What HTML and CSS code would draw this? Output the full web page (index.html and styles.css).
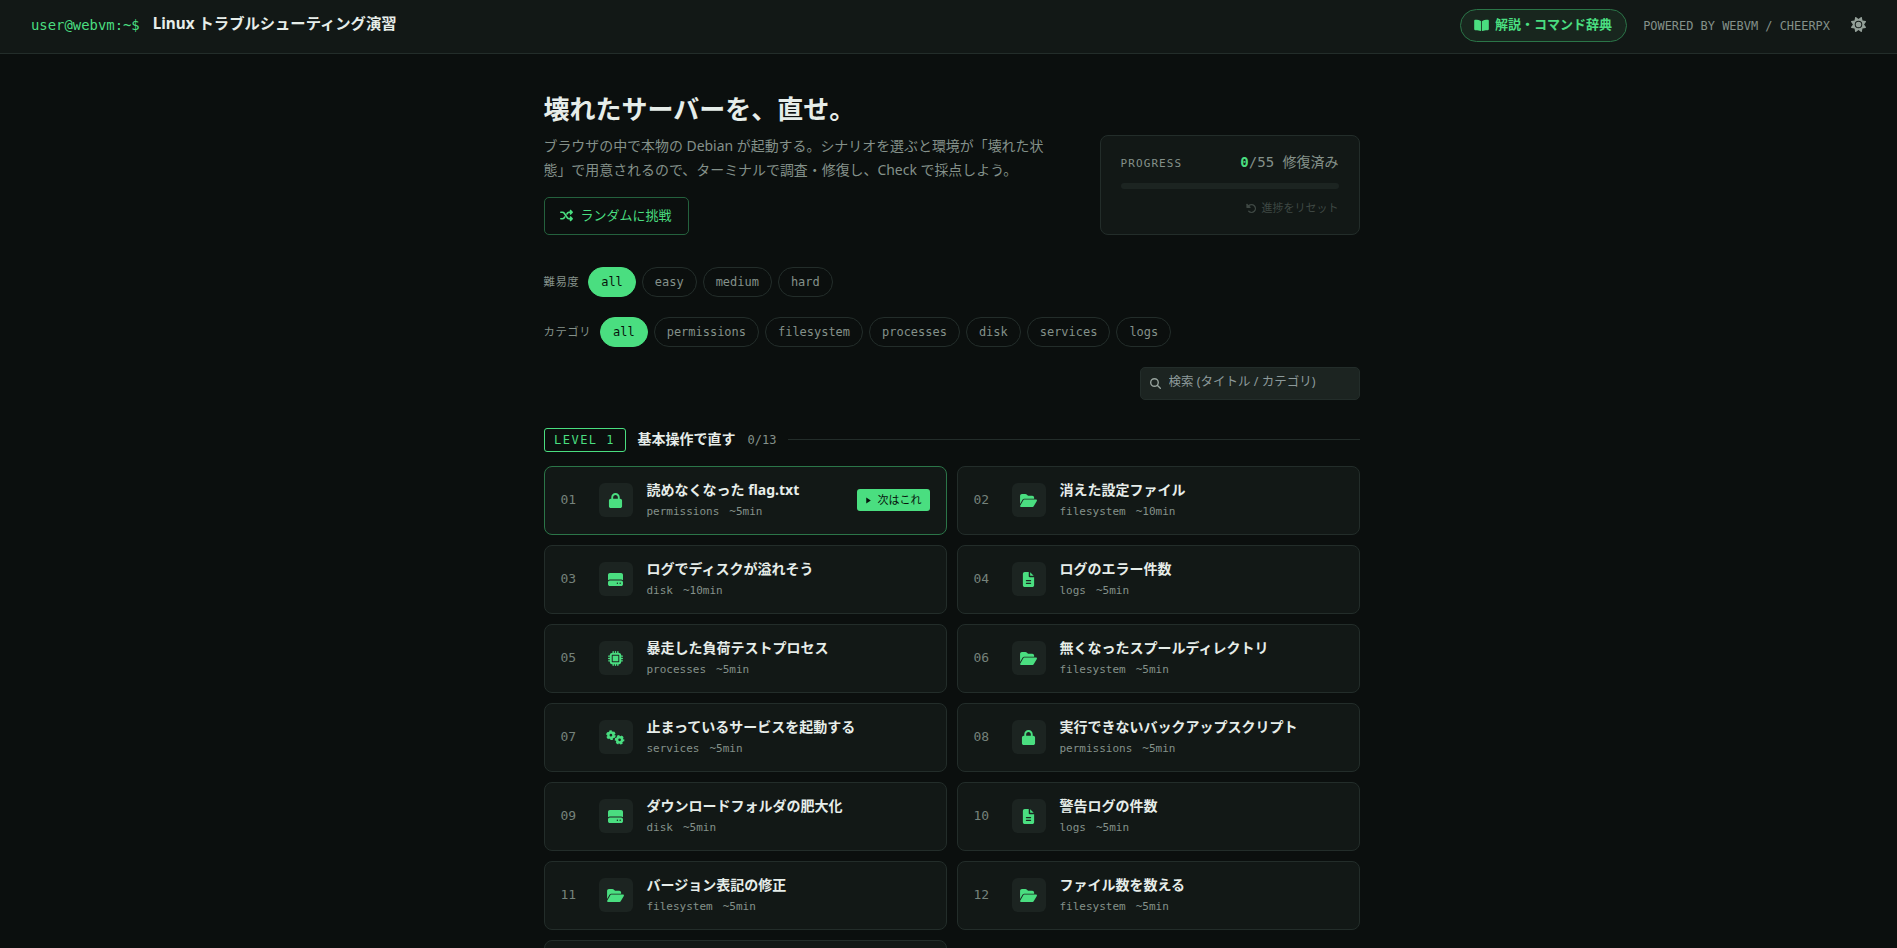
FILE: index.html
```html
<!DOCTYPE html>
<html lang="ja">
<head>
  <meta charset="UTF-8" />
  <meta name="viewport" content="width=device-width, initial-scale=1.0"/>
  <title>Linux トラブルシューティング演習</title>
  <link rel="stylesheet" href="styles.css">
</head>
<body>
  <svg class="sprite" aria-hidden="true">
    <symbol id="i-lock" viewBox="0 0 448 512"><path d="M144 144v48h160v-48c0-44-36-80-80-80s-80 36-80 80zM80 192v-48C80 64 144 0 224 0s144 64 144 144v48h16c35 0 64 29 64 64v192c0 35-29 64-64 64H64c-35 0-64-29-64-64V256c0-35 29-64 64-64z"/></symbol>
    <symbol id="i-folder" viewBox="0 0 576 512"><path d="M89 224 0 375V96c0-35 29-64 64-64h118c17 0 33 7 45 19l26 26c12 12 28 19 45 19h118c35 0 64 29 64 64v32H144c-23 0-44 12-55 32zm27 16c6-10 17-16 28-16h400c12 0 22 6 28 16s6 22 0 32L460 464c-6 10-17 16-28 16H32c-12 0-22-6-28-16s-6-22 0-32z"/></symbol>
    <symbol id="i-disk" viewBox="0 0 512 512"><path d="M0 96c0-35 29-64 64-64h384c35 0 64 29 64 64v184c-17-15-40-24-64-24H64c-24 0-47 9-64 24zM64 288h384c35 0 64 29 64 64v64c0 35-29 64-64 64H64c-35 0-64-29-64-64v-64c0-35 29-64 64-64zm256 120a24 24 0 1 0 0-48 24 24 0 1 0 0 48zm96 0a24 24 0 1 0 0-48 24 24 0 1 0 0 48z" fill-rule="evenodd"/></symbol>
    <symbol id="i-file" viewBox="0 0 384 512"><path d="M64 0C29 0 0 29 0 64v384c0 35 29 64 64 64h256c35 0 64-29 64-64V176H232c-18 0-32-14-32-32V0zm184 8v120h122zM120 272h144c11 0 20 9 20 20s-9 20-20 20H120c-11 0-20-9-20-20s9-20 20-20zm0 96h144c11 0 20 9 20 20s-9 20-20 20H120c-11 0-20-9-20-20s9-20 20-20z" fill-rule="evenodd"/></symbol>
    <symbol id="i-chip" viewBox="0 0 512 512"><path d="M176 24v40M256 24v40M336 24v40M176 448v40M256 448v40M336 448v40M24 176h40M24 256h40M24 336h40M448 176h40M448 256h40M448 336h40" stroke="currentColor" stroke-width="48" stroke-linecap="round"/><path d="M128 64h256c35 0 64 29 64 64v256c0 35-29 64-64 64H128c-35 0-64-29-64-64V128c0-35 29-64 64-64zm16 64c-9 0-16 7-16 16v224c0 9 7 16 16 16h224c9 0 16-7 16-16V144c0-9-7-16-16-16zm16 32h192v192H160z" fill-rule="evenodd"/></symbol>
    <symbol id="i-gears" viewBox="0 0 640 512"><g fill="none" stroke="currentColor"><circle cx="164" cy="176" r="88" stroke-width="84"/><circle cx="164" cy="176" r="137" stroke-width="54" stroke-dasharray="86 57.5"/><circle cx="460" cy="336" r="88" stroke-width="84"/><circle cx="460" cy="336" r="137" stroke-width="54" stroke-dasharray="86 57.5" stroke-dashoffset="36"/></g></symbol>
    <symbol id="i-book" viewBox="0 0 576 512"><path d="M272 84v372c0 12-8 20-18 16-60-24-122-34-222-32-18 0-32-14-32-32V64c0-18 14-32 32-32 110 0 180 12 240 52zM304 84v372c0 12 8 20 18 16 60-24 122-34 222-32 18 0 32-14 32-32V64c0-18-14-32-32-32-110 0-180 12-240 52z"/></symbol>
    <symbol id="i-shuffle" viewBox="0 0 512 512"><path d="M32 128h64c26 0 48 10 64 32l136 192c16 22 38 32 64 32h60M32 384h64c26 0 48-10 64-32l24-34M272 194l24-34c16-22 38-32 64-32h60" fill="none" stroke="currentColor" stroke-width="64" stroke-linecap="round"/><path d="M403 34c12-5 26-2 35 7l64 64c13 12 13 33 0 46l-64 64c-9 9-23 12-35 7s-19-17-19-30V64c0-13 7-25 19-30zM403 290c12-5 26-2 35 7l64 64c13 12 13 33 0 46l-64 64c-9 9-23 12-35 7s-19-17-19-30V320c0-13 7-25 19-30z"/></symbol>
    <symbol id="i-undo" viewBox="0 0 512 512"><path d="M128 128a181 181 0 1 1 0 256" fill="none" stroke="currentColor" stroke-width="64" stroke-linecap="round"/><path d="M16 56c0-22 26-32 41-17l152 152c15 15 5 41-17 41H40c-14 0-24-10-24-24z"/></symbol>
    <symbol id="i-search" viewBox="0 0 512 512"><path d="M208 32a176 176 0 1 1 0 352 176 176 0 1 1 0-352zm130 306 142 142" fill="none" stroke="currentColor" stroke-width="64" stroke-linecap="round"/></symbol>
    <symbol id="i-sun" viewBox="0 0 512 512"><path d="M361 2c6 2 10 7 11 13l20 105 105 20c6 1 11 5 13 11s2 12-2 17l-61 88 61 88c4 5 4 11 2 17s-7 10-13 11l-105 20-20 105c-1 6-5 11-11 13s-12 2-17-2l-88-61-88 61c-5 4-11 4-17 2s-10-7-11-13l-20-105-105-20c-6-1-11-5-13-11s-2-12 2-17l61-88-61-88c-4-5-4-11-2-17s7-10 13-11l105-20 20-105c1-6 5-11 11-13s12-2 17 2l88 61 88-61c5-4 11-4 17-2zM256 128a128 128 0 1 0 0 256 128 128 0 1 0 0-256zm0 32a96 96 0 1 1 0 192 96 96 0 1 1 0-192z" fill-rule="evenodd"/></symbol>
    <symbol id="i-play" viewBox="0 0 384 512"><path d="M20 20v472l350-236z"/></symbol>
  </svg>

  <header class="topbar">
    <span class="prompt">user@webvm:~$</span>
    <h1>Linux トラブルシューティング演習</h1>
    <nav class="top-right">
      <a class="dict"><svg class="icon-book"><use href="#i-book"/></svg><span>解説・コマンド辞典</span></a>
      <span class="powered">POWERED BY WEBVM / CHEERPX</span>
      <svg class="icon-sun"><use href="#i-sun"/></svg>
    </nav>
  </header>

  <main class="wrap">
    <section class="hero">
      <div class="hero-text">
        <h2>壊れたサーバーを、直せ。</h2>
        <p>ブラウザの中で本物の Debian が起動する。シナリオを選ぶと環境が「壊れた状<br>態」で用意されるので、ターミナルで調査・修復し、Check で採点しよう。</p>
        <button class="random"><svg><use href="#i-shuffle"/></svg><span>ランダムに挑戦</span></button>
      </div>
      <div class="progress">
        <div class="progress-head">
          <span class="progress-label">PROGRESS</span>
          <span class="progress-count"><b>0</b>/55 修復済み</span>
        </div>
        <div class="bar"></div>
        <button class="reset"><svg><use href="#i-undo"/></svg><span>進捗をリセット</span></button>
      </div>
    </section>

    <div class="filters">
      <span class="filter-label">難易度</span>
      <button class="chip active">all</button>
      <button class="chip">easy</button>
      <button class="chip">medium</button>
      <button class="chip">hard</button>
    </div>
    <div class="filters">
      <span class="filter-label">カテゴリ</span>
      <button class="chip active">all</button>
      <button class="chip">permissions</button>
      <button class="chip">filesystem</button>
      <button class="chip">processes</button>
      <button class="chip">disk</button>
      <button class="chip">services</button>
      <button class="chip">logs</button>
    </div>
    <label class="search">
      <svg><use href="#i-search"/></svg>
      <input type="text" placeholder="検索 (タイトル / カテゴリ)">
    </label>

    <div class="level">
      <span class="level-tag">LEVEL 1</span>
      <h3>基本操作で直す</h3>
      <span class="level-count">0/13</span>
      <span class="level-line"></span>
    </div>

    <div class="grid" id="grid"></div>
  </main>

  <script>
    const icons = {
      permissions: "lock", filesystem: "folder", disk: "disk",
      logs: "file", processes: "chip", services: "gears"
    };
    const scenarios = [
      ["読めなくなった flag.txt", "permissions", 5],
      ["消えた設定ファイル", "filesystem", 10],
      ["ログでディスクが溢れそう", "disk", 10],
      ["ログのエラー件数", "logs", 5],
      ["暴走した負荷テストプロセス", "processes", 5],
      ["無くなったスプールディレクトリ", "filesystem", 5],
      ["止まっているサービスを起動する", "services", 5],
      ["実行できないバックアップスクリプト", "permissions", 5],
      ["ダウンロードフォルダの肥大化", "disk", 5],
      ["警告ログの件数", "logs", 5],
      ["バージョン表記の修正", "filesystem", 5],
      ["ファイル数を数える", "filesystem", 5]
    ];
    document.getElementById("grid").innerHTML = scenarios.map(([title, cat, min], i) => `
      <a class="card${i === 0 ? " next" : ""}">
        <span class="num">${String(i + 1).padStart(2, "0")}</span>
        <span class="tile"><svg class="icon-${icons[cat]}"><use href="#i-${icons[cat]}"/></svg></span>
        <span class="info">
          <span class="title">${title}</span>
          <span class="meta"><span>${cat}</span><span>~${min}min</span></span>
        </span>
        ${i === 0 ? '<span class="badge"><svg><use href="#i-play"/></svg><span>次はこれ</span></span>' : ""}
      </a>`).join("") + '<a class="card"></a>';
  </script>
</body>
</html>
```
FILE: styles.css
```css
:root {
  --bg: #0b0f0e;
  --panel: #121816;
  --raised: #1c2421;
  --line: #232d2a;
  --text: #e6ede9;
  --muted: #84918a;
  --green: #4ade80;
  --green-dim: #2b7548;
  --sans: "Noto Sans", "Noto Sans CJK JP", sans-serif;
  --mono: "DejaVu Sans Mono", "Noto Sans CJK JP", monospace;
}
* {
  box-sizing: border-box;
}
body {
  margin: 0;
  height: 948px;
  overflow: hidden;
  background: var(--bg);
  color: var(--text);
  font-family: var(--sans);
}
h1, h2, h3, p {
  margin: 0;
}
button {
  font-family: inherit;
  background: none;
  border: none;
}
svg {
  fill: currentColor;
  flex: none;
}
.sprite {
  display: none;
}

/* header */
.topbar {
  height: 54px;
  padding: 0 30px 2px 31px;
  display: flex;
  align-items: center;
  background: var(--panel);
  border-bottom: 1px solid var(--line);
}
.prompt {
  padding-bottom: 1px;
  font-family: var(--mono);
  font-size: 13.9px;
  color: var(--green);
  margin-right: 13px;
}
h1 {
  padding-bottom: 6px;
  font-size: 15.3px;
  font-weight: 700;
  line-height: 20px;
}
.top-right {
  margin-left: auto;
  display: flex;
  align-items: center;
}
.dict {
  height: 33px;
  padding: 0 14px 0 13px;
  display: flex;
  align-items: center;
  gap: 6px;
  border: 1px solid var(--green-dim);
  border-radius: 17px;
  background: #18261e;
  color: var(--green);
  font-size: 13px;
  font-weight: 700;
}
.dict span {
  padding-bottom: 5px;
}
.icon-book {
  width: 15px;
  height: 13px;
}
.powered {
  margin-left: 16px;
  font-family: var(--mono);
  font-size: 11.95px;
  color: var(--muted);
}
.icon-sun {
  width: 15px;
  height: 15px;
  margin: 0 1px 2px 21px;
  color: #94a099;
}

/* hero */
.wrap {
  width: 822px;
  margin: 0 auto;
  padding-left: 6px;
}
.hero {
  padding-top: 35px;
  display: flex;
  justify-content: space-between;
  align-items: flex-end;
}
h2 {
  padding-bottom: 1px;
  font-size: 26px;
  font-weight: 700;
  line-height: 40px;
}
.hero p {
  margin-top: 4px;
  font-size: 13.95px;
  line-height: 24px;
  color: var(--muted);
  white-space: nowrap;
}
.random {
  width: 145px;
  height: 38px;
  margin-top: 15px;
  padding: 0 0 2px;
  display: flex;
  align-items: center;
  justify-content: center;
  gap: 7px;
  border: 1px solid #24613d;
  border-radius: 5px;
  color: var(--green);
  font-size: 13px;
}
.random span {
  padding-bottom: 2px;
}
.random svg {
  width: 13px;
  height: 13px;
}
.progress {
  width: 260px;
  height: 100px;
  padding: 15px 20px;
  background: var(--panel);
  border: 1px solid var(--line);
  border-radius: 8px;
}
.progress-head {
  display: flex;
  justify-content: space-between;
  align-items: center;
  height: 24px;
  font-family: var(--mono);
  color: var(--muted);
}
.progress-label {
  font-size: 11px;
  letter-spacing: 1.1px;
}
.progress-count {
  padding-bottom: 4px;
  font-size: 14px;
}
.progress-count b {
  color: var(--green);
}
.bar {
  height: 6px;
  margin-top: 8px;
  border-radius: 3px;
  background: var(--raised);
}
.reset {
  margin: 11px 0 0 auto;
  padding: 0;
  display: flex;
  align-items: center;
  gap: 5px;
  color: #3f4844;
  font-size: 11px;
  line-height: 16px;
}
.reset svg {
  width: 11px;
  height: 11px;
}

/* filters */
.filters {
  display: flex;
  align-items: center;
  gap: 6px;
  height: 30px;
  margin-top: 20px;
}
.hero + .filters {
  margin-top: 32px;
}
.filter-label {
  margin-right: 3px;
  padding-bottom: 2px;
  font-size: 11.4px;
  letter-spacing: 0.5px;
  color: var(--muted);
}
.chip {
  height: 30px;
  padding: 0 12px;
  border: 1px solid var(--line);
  border-radius: 15px;
  color: var(--muted);
  font-family: var(--mono);
  font-size: 11.97px;
}
.chip.active {
  background: var(--green);
  border-color: var(--green);
  color: #07130c;
}
.search {
  width: 220px;
  height: 33px;
  margin: 20px 0 0 auto;
  padding: 0 9px;
  display: flex;
  align-items: center;
  gap: 8px;
  background: var(--raised);
  border: 1px solid var(--line);
  border-radius: 5px;
  color: #97a39d;
}
.search svg {
  width: 11px;
  height: 11px;
}
.search input {
  flex: 1;
  min-width: 0;
  padding: 0 0 5px;
  border: none;
  background: none;
  font: 12.5px var(--sans);
}
.search input::placeholder {
  color: #8d9a9b;
}

/* level heading */
.level {
  height: 24px;
  margin-top: 28px;
  display: flex;
  align-items: center;
}
.level-tag {
  width: 82px;
  height: 24px;
  border: 1px solid var(--green);
  border-radius: 3px;
  color: var(--green);
  font-family: var(--mono);
  font-size: 12px;
  letter-spacing: 1.5px;
  line-height: 22px;
  text-align: center;
}
h3 {
  margin-left: 12px;
  padding-bottom: 2px;
  font-size: 14px;
  line-height: 22px;
}
.level-count {
  margin-left: 12px;
  font-family: var(--mono);
  font-size: 12px;
  color: var(--muted);
}
.level-line {
  flex: 1;
  height: 1px;
  margin: 0 0 1px 12px;
  background: var(--line);
}

/* scenario cards */
.grid {
  margin-top: 14px;
  display: grid;
  grid-template-columns: 1fr 1fr;
  gap: 10px;
}
.card {
  height: 69px;
  padding: 0 16px 1px;
  display: flex;
  align-items: center;
  background: var(--panel);
  border: 1px solid var(--line);
  border-radius: 8px;
}
.card.next {
  border-color: var(--green-dim);
}
.num {
  width: 38px;
  padding-bottom: 1px;
  font-family: var(--mono);
  font-size: 13px;
  color: #75827b;
}
.tile {
  width: 34px;
  height: 34px;
  display: flex;
  align-items: center;
  justify-content: center;
  border-radius: 6px;
  background: var(--raised);
  color: var(--green);
}
.tile svg {
  width: 15px;
  height: 15px;
}
.tile .icon-folder {
  width: 17px;
}
.tile .icon-gears {
  width: 19px;
}
.info {
  flex: 1;
  margin-left: 14px;
}
.title {
  display: block;
  height: 22px;
  font-size: 14px;
  font-weight: 700;
  line-height: 22px;
}
.meta {
  display: flex;
  gap: 10px;
  font-family: var(--mono);
  font-size: 11px;
  line-height: 21px;
  color: var(--muted);
}
.badge {
  height: 22px;
  padding: 0 8px 0 9px;
  display: flex;
  align-items: center;
  gap: 7px;
  border-radius: 3px;
  background: var(--green);
  color: #07130c;
  font-size: 11px;
}
.badge svg {
  width: 5px;
  height: 7px;
}
.badge span {
  padding-bottom: 2px;
}
```
